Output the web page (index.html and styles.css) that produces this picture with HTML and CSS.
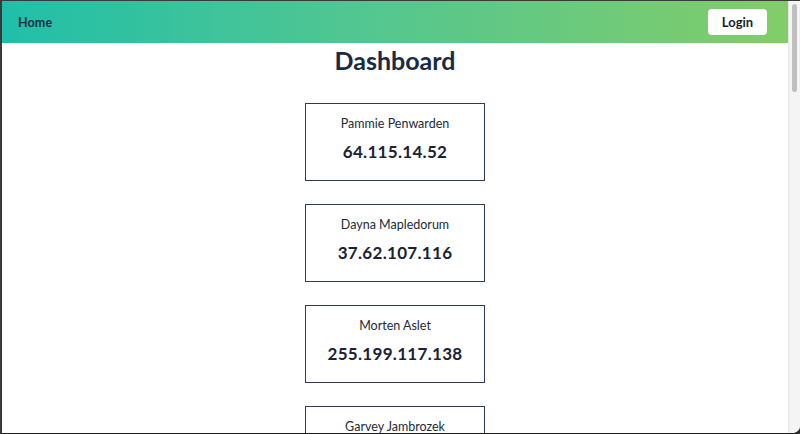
FILE: index.html
```html
<!DOCTYPE html>
<html>
<head>
<meta charset="utf-8">
<link rel="stylesheet" href="styles.css">
</head>
<body>
<div class="window">
  <div class="page">
    <header class="nav">
      <a class="home">Home</a>
      <button class="login">Login</button>
    </header>
    <main class="content">
      <h1 class="title">Dashboard</h1>
      <div class="cards">
        <div class="card"><div class="name">Pammie Penwarden</div><div class="ip">64.115.14.52</div></div>
        <div class="card"><div class="name">Dayna Mapledorum</div><div class="ip">37.62.107.116</div></div>
        <div class="card"><div class="name">Morten Aslet</div><div class="ip">255.199.117.138</div></div>
        <div class="card"><div class="name">Garvey Jambrozek</div><div class="ip">112.41.8.203</div></div>
      </div>
    </main>
  </div>
  <div class="scrollbar"><div class="thumb"></div></div>
</div>
</body>
</html>
```
FILE: styles.css
```css
html, body {
  margin: 0;
  padding: 0;
  background: #2b2b2b;
}
body {
  font-family: Lato, "Open Sans", "Liberation Sans", sans-serif;
  color: #1b2a44;
}
.window {
  box-sizing: border-box;
  width: 800px;
  height: 434px;
  display: flex;
  background: #fff;
  border-top: 1px solid #3a3a3a;
  border-left: 2px solid #3a3a3a;
  border-bottom: 1px solid #1e1e1e;
  border-bottom-right-radius: 8px;
  overflow: hidden;
}
.page {
  flex: 1;
  overflow: hidden;
  background: #fff;
}
.nav {
  height: 42px;
  display: flex;
  align-items: center;
  justify-content: space-between;
  padding: 0 21px 0 16px;
  background: linear-gradient(to right, #20bfa9 0%, #52c691 45%, #82cd68 100%);
}
.home {
  font-size: 12.5px;
  font-weight: 700;
  color: #1b2a44;
  letter-spacing: 0.1px;
}
.login {
  width: 59px;
  height: 26px;
  border: none;
  border-radius: 4px;
  background: #fff;
  font-family: inherit;
  font-size: 13px;
  font-weight: 700;
  color: #1a1f2b;
  padding: 0;
}
.content {
  display: flex;
  flex-direction: column;
  align-items: center;
}
.title {
  margin: 2px 0 0;
  font-size: 25px;
  line-height: 30px;
  font-weight: 700;
  color: #1b2a44;
}
.cards {
  margin-top: 28px;
  display: flex;
  flex-direction: column;
  gap: 23px;
}
.card {
  box-sizing: border-box;
  width: 180px;
  height: 78px;
  border: 1px solid #2f3b52;
  display: flex;
  flex-direction: column;
  align-items: center;
  padding-top: 12px;
}
.name {
  font-size: 12.5px;
  line-height: 16px;
  color: #222b3a;
}
.ip {
  margin-top: 8px;
  font-size: 17px;
  line-height: 24px;
  font-weight: 700;
  color: #1b2233;
  letter-spacing: 0.3px;
}
.scrollbar {
  width: 11px;
  background: #f4f4f4;
  border-left: 1px solid #e6e6e6;
}
.thumb {
  width: 5px;
  height: 88px;
  margin: 3px 0 0 3px;
  border-radius: 3px;
  background: #c0c0c0;
}
```
